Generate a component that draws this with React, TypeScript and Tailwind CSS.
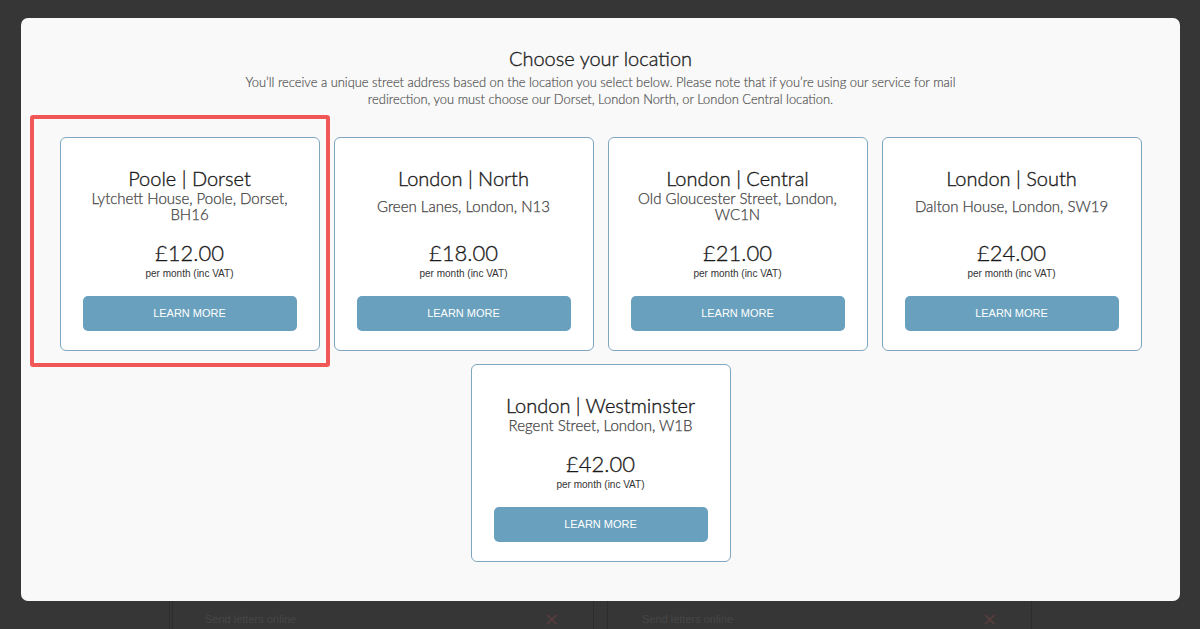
import React from "react";

type Loc = { title: string; address: React.ReactNode; price: string };

const locations: Loc[] = [
  { title: "Poole | Dorset", address: <>Lytchett House, Poole, Dorset,<br />BH16</>, price: "£12.00" },
  { title: "London | North", address: <>Green Lanes, London, N13</>, price: "£18.00" },
  { title: "London | Central", address: <>Old Gloucester Street, London,<br />WC1N</>, price: "£21.00" },
  { title: "London | South", address: <>Dalton House, London, SW19</>, price: "£24.00" },
  { title: "London | Westminster", address: <>Regent Street, London, W1B</>, price: "£42.00" },
];

function Card({ loc, highlight }: { loc: Loc; highlight?: boolean }) {
  return (
    <div className="relative w-[260px] flex flex-col items-center rounded-[6px] border border-[#7ea6c0] bg-white px-[22px] pt-[28px] pb-[19px] text-center">
      {highlight && (
        <div className="pointer-events-none absolute left-[-31px] top-[-23px] w-[300px] h-[252px] rounded-[3px] border-[4px] border-[#f25757]" />
      )}
      <div className="text-[20px] leading-[24px] font-light [-webkit-text-stroke:0.35px_#1a1a1a] text-[#1a1a1a] whitespace-nowrap">{loc.title}</div>
      <div className="flex-1 flex items-center justify-center text-[15px] leading-[16px] font-light [-webkit-text-stroke:0.25px_#444] text-[#444] whitespace-nowrap">
        <div>{loc.address}</div>
      </div>
      <div className="mt-[17px] text-[22px] leading-[28px] font-light [-webkit-text-stroke:0.3px_#1a1a1a] text-[#1a1a1a]">{loc.price}</div>
      <div className="text-[10px] leading-[14px] text-[#333] font-['Liberation_Sans',sans-serif]">per month (inc VAT)</div>
      <button className="mt-[15px] w-full h-[35px] rounded-[5px] bg-[#68a0bd] text-white text-[11px] font-['Liberation_Sans',sans-serif]">
        LEARN MORE
      </button>
    </div>
  );
}

export default function App() {
  return (
    <div className="relative w-[1200px] h-[629px] overflow-hidden bg-[#363636] font-['Lato',sans-serif]">
      {/* dimmed page behind the modal */}
      <div className="flex h-full flex-col justify-end">
        <div className="flex h-[28px]">
          <div className="ml-[169px] w-[425px] border-l-[4px] border-double border-[#2d2d2d] border-r border-r-[#2d2d2d] flex items-center pt-[8px] pl-[32px] pr-[34px] justify-between">
            <span className="text-[11px] text-[#474747] font-['Liberation_Sans',sans-serif]">Send letters online</span>
            <span className="text-[18px] leading-none text-[#553c3c]">✕</span>
          </div>
          <div className="ml-[13px] w-[425px] border-l border-r border-[#2d2d2d] flex items-center pt-[8px] pl-[34px] pr-[34px] justify-between">
            <span className="text-[11px] text-[#474747] font-['Liberation_Sans',sans-serif]">Send letters online</span>
            <span className="text-[18px] leading-none text-[#553c3c]">✕</span>
          </div>
        </div>
      </div>

      {/* modal */}
      <div className="absolute left-[21px] top-[18px] w-[1159px] h-[583px] rounded-[7px] bg-[#f9f9f9]">
        <div className="flex flex-col items-center pt-[28px]">
          <h1 className="text-[20px] leading-[24px] font-light [-webkit-text-stroke:0.35px_#222] text-[#222]">Choose your location</h1>
          <p className="mt-[4px] text-center text-[12.9px] leading-[17px] font-light [-webkit-text-stroke:0.2px_#555] text-[#555] whitespace-nowrap">
            You’ll receive a unique street address based on the location you select below. Please note that if you’re using our service for mail
            <br />
            redirection, you must choose our Dorset, London North, or London Central location.
          </p>
          <div className="mt-[29px] w-[1082px] flex flex-wrap justify-center gap-x-[14px] gap-y-[13px]">
            {locations.map((l, i) => (
              <Card key={l.title} loc={l} highlight={i === 0} />
            ))}
          </div>
        </div>
      </div>
    </div>
  );
}
